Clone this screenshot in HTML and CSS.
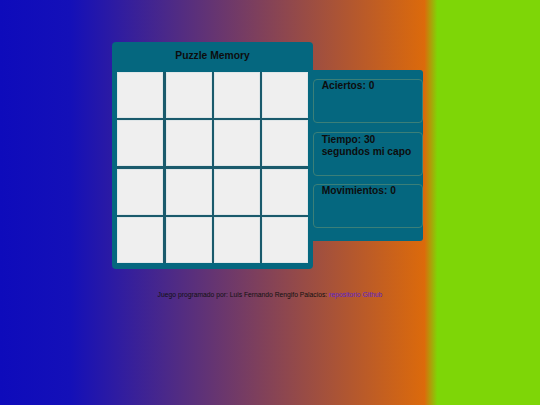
FILE: index.html
```html
<!DOCTYPE html>
<html lang="es">
<head>
<meta charset="utf-8">
<title>Puzzle Memory</title>
<link rel="stylesheet" href="styles.css">
</head>
<body>
<main class="game">
  <section class="board">
    <h1 class="title">Puzzle Memory</h1>
    <div class="grid">
      <div class="cell"></div><div class="cell"></div><div class="cell"></div><div class="cell"></div>
      <div class="cell"></div><div class="cell"></div><div class="cell"></div><div class="cell"></div>
      <div class="cell"></div><div class="cell"></div><div class="cell"></div><div class="cell"></div>
      <div class="cell"></div><div class="cell"></div><div class="cell"></div><div class="cell"></div>
    </div>
  </section>
  <aside class="stats">
    <div class="stat"><h2 class="stat-text">Aciertos: 0</h2></div>
    <div class="stat"><h2 class="stat-text stat-text-low">Tiempo: 30 segundos mi capo</h2></div>
    <div class="stat"><h2 class="stat-text">Movimientos: 0</h2></div>
  </aside>
</main>
<footer class="footer">Juego programado por: Luis Fernando Rengifo Palacios: <a class="link" href="#">repositorio Github</a></footer>
</body>
</html>
```
FILE: styles.css
```css
html, body {
  margin: 0;
  padding: 0;
}
body {
  width: 540px;
  height: 405px;
  overflow: hidden;
  font-family: "Liberation Sans", Arial, sans-serif;
  color: #111;
  background: linear-gradient(to right, #0e0bbb 0%, #1410b8 13%, #dc6a0b 78.6%, #7ed607 81%, #7ed607 100%);
  display: flex;
  flex-direction: column;
  align-items: center;
}
.game {
  margin-top: 42px;
  margin-left: -5px;
  display: flex;
  align-items: center;
}
.board {
  width: 190.4px;
  padding: 0 5px 6px 5px;
  background: #05677f;
  border-radius: 4px;
}
.title {
  margin: 0;
  height: 30px;
  line-height: 28px;
  font-size: 10.3px;
  font-weight: bold;
  text-align: center;
  color: #0d0d0d;
}
.grid {
  display: grid;
  grid-template-columns: repeat(4, 46px);
  grid-auto-rows: 46px;
  gap: 2.4px;
  background: #1a5a6c;
}
.cell {
  background: #efefef;
  box-shadow: inset 0 0 0 1px #dfe6e8;
}
.stats {
  width: 110px;
  box-sizing: border-box;
  padding: 8.6px 0 12.7px 0;
  background: #05677f;
  border-radius: 0 3px 3px 0;
  display: flex;
  flex-direction: column;
  gap: 8.7px;
}
.stat {
  height: 44px;
  box-sizing: border-box;
  border: 1px solid #3b7f78;
  border-radius: 4px;
  padding: 0 6px 0 8px;
}
.stat-text {
  margin: 0;
  font-size: 10.2px;
  line-height: 12.3px;
  font-weight: bold;
  color: #0d0d0d;
}
.stat-text-low {
  padding-top: 1px;
}
.footer {
  margin-top: 21.5px;
  font-size: 6.75px;
  color: #111;
}
.link {
  color: #5a24c8;
  text-decoration: none;
}
```
